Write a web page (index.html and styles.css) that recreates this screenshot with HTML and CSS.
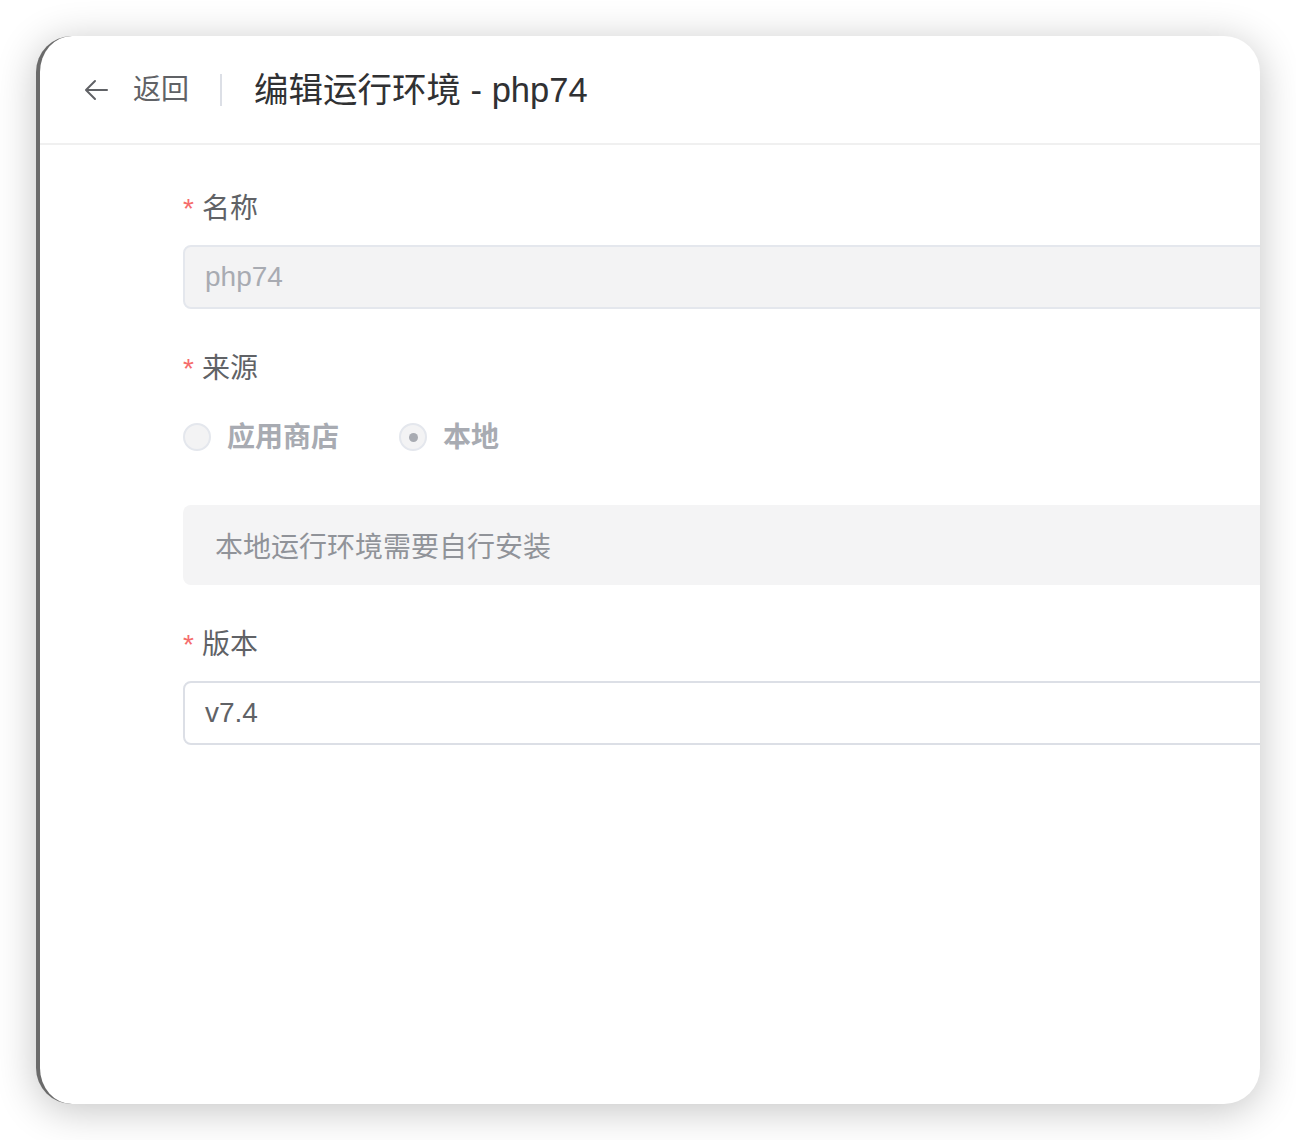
FILE: index.html
```html
<!DOCTYPE html>
<html lang="zh-CN">
<head>
<meta charset="utf-8">
<title>编辑运行环境 - php74</title>
<link rel="stylesheet" href="styles.css">
</head>
<body>
<div class="card">
  <header class="page-header">
    <div class="back">
      <svg class="back-icon" viewBox="0 0 1024 1024" width="32" height="32" aria-hidden="true">
        <path fill="currentColor" d="M224 480h640a32 32 0 1 1 0 64H224a32 32 0 0 1 0-64z"/>
        <path fill="currentColor" d="m237.248 512 265.408 265.344a32 32 0 0 1-45.312 45.312l-288-288a32 32 0 0 1 0-45.312l288-288a32 32 0 1 1 45.312 45.312L237.248 512z"/>
      </svg>
      <span class="back-text">返回</span>
    </div>
    <span class="divider"></span>
    <h1 class="title">编辑运行环境 - php74</h1>
  </header>
  <main class="body">
    <form class="form">
      <div class="form-item">
        <label class="label"><span class="req">*</span>名称</label>
        <div class="input disabled"><span>php74</span></div>
      </div>
      <div class="form-item">
        <label class="label"><span class="req">*</span>来源</label>
        <div class="radio-group">
          <span class="radio"><span class="radio-circle"></span><span class="radio-text">应用商店</span></span>
          <span class="radio"><span class="radio-circle checked"></span><span class="radio-text">本地</span></span>
        </div>
      </div>
      <div class="form-item">
        <div class="alert">本地运行环境需要自行安装</div>
      </div>
      <div class="form-item">
        <label class="label"><span class="req">*</span>版本</label>
        <div class="input"><span>v7.4</span></div>
      </div>
    </form>
  </main>
</div>
</body>
</html>
```
FILE: styles.css
```css
html, body {
  margin: 0;
  padding: 0;
  background: #ffffff;
}
body {
  padding: 36px;
  font-family: "Liberation Sans", "Noto Sans CJK SC", sans-serif;
}
.card {
  width: 1224px;
  height: 1068px;
  box-sizing: border-box;
  background: #ffffff;
  border-radius: 36px;
  border-left: 4px solid #6b6b6b;
  box-shadow: 0 6px 40px rgba(0, 0, 0, 0.24);
  overflow: hidden;
}
.page-header {
  height: 107px;
  border-bottom: 2px solid #f0f0f0;
  display: flex;
  align-items: center;
  padding-left: 40px;
}
.back {
  display: flex;
  align-items: center;
  color: #606266;
}
.back-icon {
  display: block;
  margin-right: 21px;
}
.back-text {
  font-size: 28px;
  line-height: 44px;
}
.divider {
  width: 2px;
  height: 32px;
  background: #dcdfe6;
  margin: 0 32px 0 31px;
}
.title {
  margin: 0;
  font-size: 34.5px;
  font-weight: 400;
  color: #303133;
  line-height: 48px;
}
.body {
  padding: 40px 0 0 143px;
}
.form {
  width: 1200px;
}
.form-item {
  margin-bottom: 36px;
}
.label {
  display: block;
  font-size: 28px;
  line-height: 44px;
  padding-top: 2px;
  color: #606266;
  margin-bottom: 14px;
}
.req {
  color: #f56c6c;
  margin-right: 8px;
}
.input {
  height: 64px;
  box-sizing: border-box;
  border: 2px solid #dcdfe6;
  border-radius: 8px;
  padding: 0 20px;
  display: flex;
  align-items: center;
  font-size: 28px;
  color: #606266;
  background: #ffffff;
}
.input.disabled {
  background: #f3f3f4;
  border-color: #e4e7ed;
  color: #a8abb2;
}
.radio-group {
  height: 64px;
  display: flex;
  align-items: center;
}
.radio {
  display: flex;
  align-items: center;
  margin-right: 60px;
}
.radio-circle {
  width: 28px;
  height: 28px;
  box-sizing: border-box;
  border: 2px solid #e4e7ed;
  border-radius: 50%;
  background: #f3f3f4;
  display: flex;
  align-items: center;
  justify-content: center;
}
.radio-circle.checked::after {
  content: "";
  width: 9px;
  height: 9px;
  border-radius: 50%;
  background: #a8abb2;
}
.radio-text {
  padding-left: 16px;
  font-size: 28px;
  font-weight: 700;
  color: #a8abb2;
  line-height: 44px;
  padding-top: 2px;
}
.alert {
  height: 80px;
  box-sizing: border-box;
  background: #f4f4f5;
  border-radius: 8px;
  padding: 0 32px;
  display: flex;
  align-items: center;
  font-size: 28px;
  color: #909399;
}
```
